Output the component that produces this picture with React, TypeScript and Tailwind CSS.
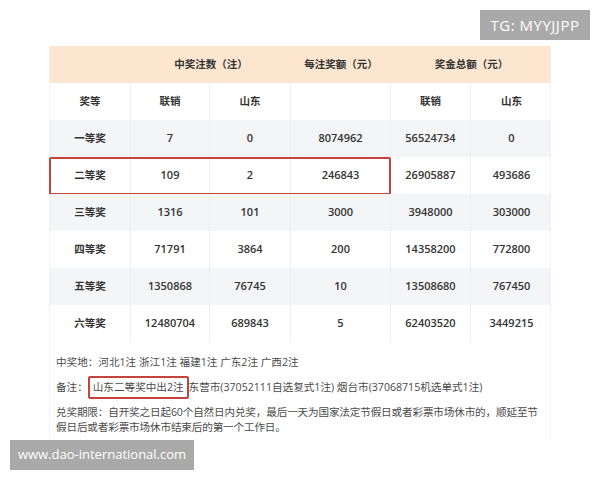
const COLS = "grid grid-cols-[81px_79px_81px_100px_80px_81px]";

const ROWS = [
  ["一等奖", "7", "0", "8074962", "56524734", "0"],
  ["二等奖", "109", "2", "246843", "26905887", "493686"],
  ["三等奖", "1316", "101", "3000", "3948000", "303000"],
  ["四等奖", "71791", "3864", "200", "14358200", "772800"],
  ["五等奖", "1350868", "76745", "10", "13508680", "767450"],
  ["六等奖", "12480704", "689843", "5", "62403520", "3449215"],
];

function Cell({ children, last }: { children?: React.ReactNode; last?: boolean }) {
  return (
    <div
      className={`flex h-[37px] items-center justify-center ${last ? "" : "border-r border-[#eceef1]"}`}
    >
      {children}
    </div>
  );
}

export default function App() {
  return (
    <div className="relative h-[480px] w-[600px] overflow-hidden bg-white font-['Open_Sans','Noto_Sans_CJK_SC',sans-serif] text-[11px] text-[#333]">
      <div className="absolute right-[10px] top-[10px] flex h-[30px] w-[110px] items-center justify-center bg-[#a9a9a9] text-[15px] tracking-[0.5px] text-white">
        TG: MYYJJPP
      </div>

      <div className="ml-[49px] mt-[46px] h-[394px] w-[502px] border-x border-[#eef0f2]">
        <div className={`${COLS} h-[37px] bg-[#fde6cf] text-[10.5px] font-semibold`}>
          <div />
          <div className="col-span-2 flex items-center justify-center">中奖注数（注）</div>
          <div className="flex items-center justify-center">每注奖额（元）</div>
          <div className="col-span-2 flex items-center justify-center">奖金总额（元）</div>
        </div>
        <div className={`${COLS} bg-white text-[10.5px] font-semibold`}>
          <Cell>奖等</Cell>
          <Cell>联销</Cell>
          <Cell>山东</Cell>
          <Cell />
          <Cell>联销</Cell>
          <Cell last>山东</Cell>
        </div>
        {ROWS.map((row, i) => (
          <div
            key={row[0]}
            className={`${COLS} relative font-semibold ${i % 2 === 0 ? "bg-[#f4f5f7]" : "bg-white"}`}
          >
            {row.map((v, j) => (
              <Cell key={j} last={j === 5}>
                <span className={j === 0 ? "text-[10.5px]" : ""}>{v}</span>
              </Cell>
            ))}
            {i === 1 && (
              <div className="pointer-events-none absolute left-[-1px] top-0 h-[38px] w-[342px] rounded-[2px] border-2 border-[#c4433d]" />
            )}
          </div>
        ))}

        <div className="px-[6px] pt-[13px] text-[10.6px] leading-[15px] text-[#4a4a4a]">
          <p>中奖地：河北1注 浙江1注 福建1注 广东2注 广西2注</p>
          <p className="mt-[6px] flex items-center">
            <span>备注：</span>
            <span className="rounded-[2px] border-2 border-[#c4433d] px-[3px] py-[2px]">山东二等奖中出2注</span>
            <span>东营市(37052111自选复式1注) 烟台市(37068715机选单式1注)</span>
          </p>
          <p className="mt-[6px] tracking-[-0.15px]">
            兑奖期限：自开奖之日起60个自然日内兑奖，最后一天为国家法定节假日或者彩票市场休市的，顺延至节假日后或者彩票市场休市结束后的第一个工作日。
          </p>
        </div>
      </div>

      <div className="absolute left-[10px] top-[440px] flex h-[30px] w-[184px] items-center justify-center bg-[#a9a9a9] text-[13px] text-white">
        www.dao-international.com
      </div>
    </div>
  );
}
